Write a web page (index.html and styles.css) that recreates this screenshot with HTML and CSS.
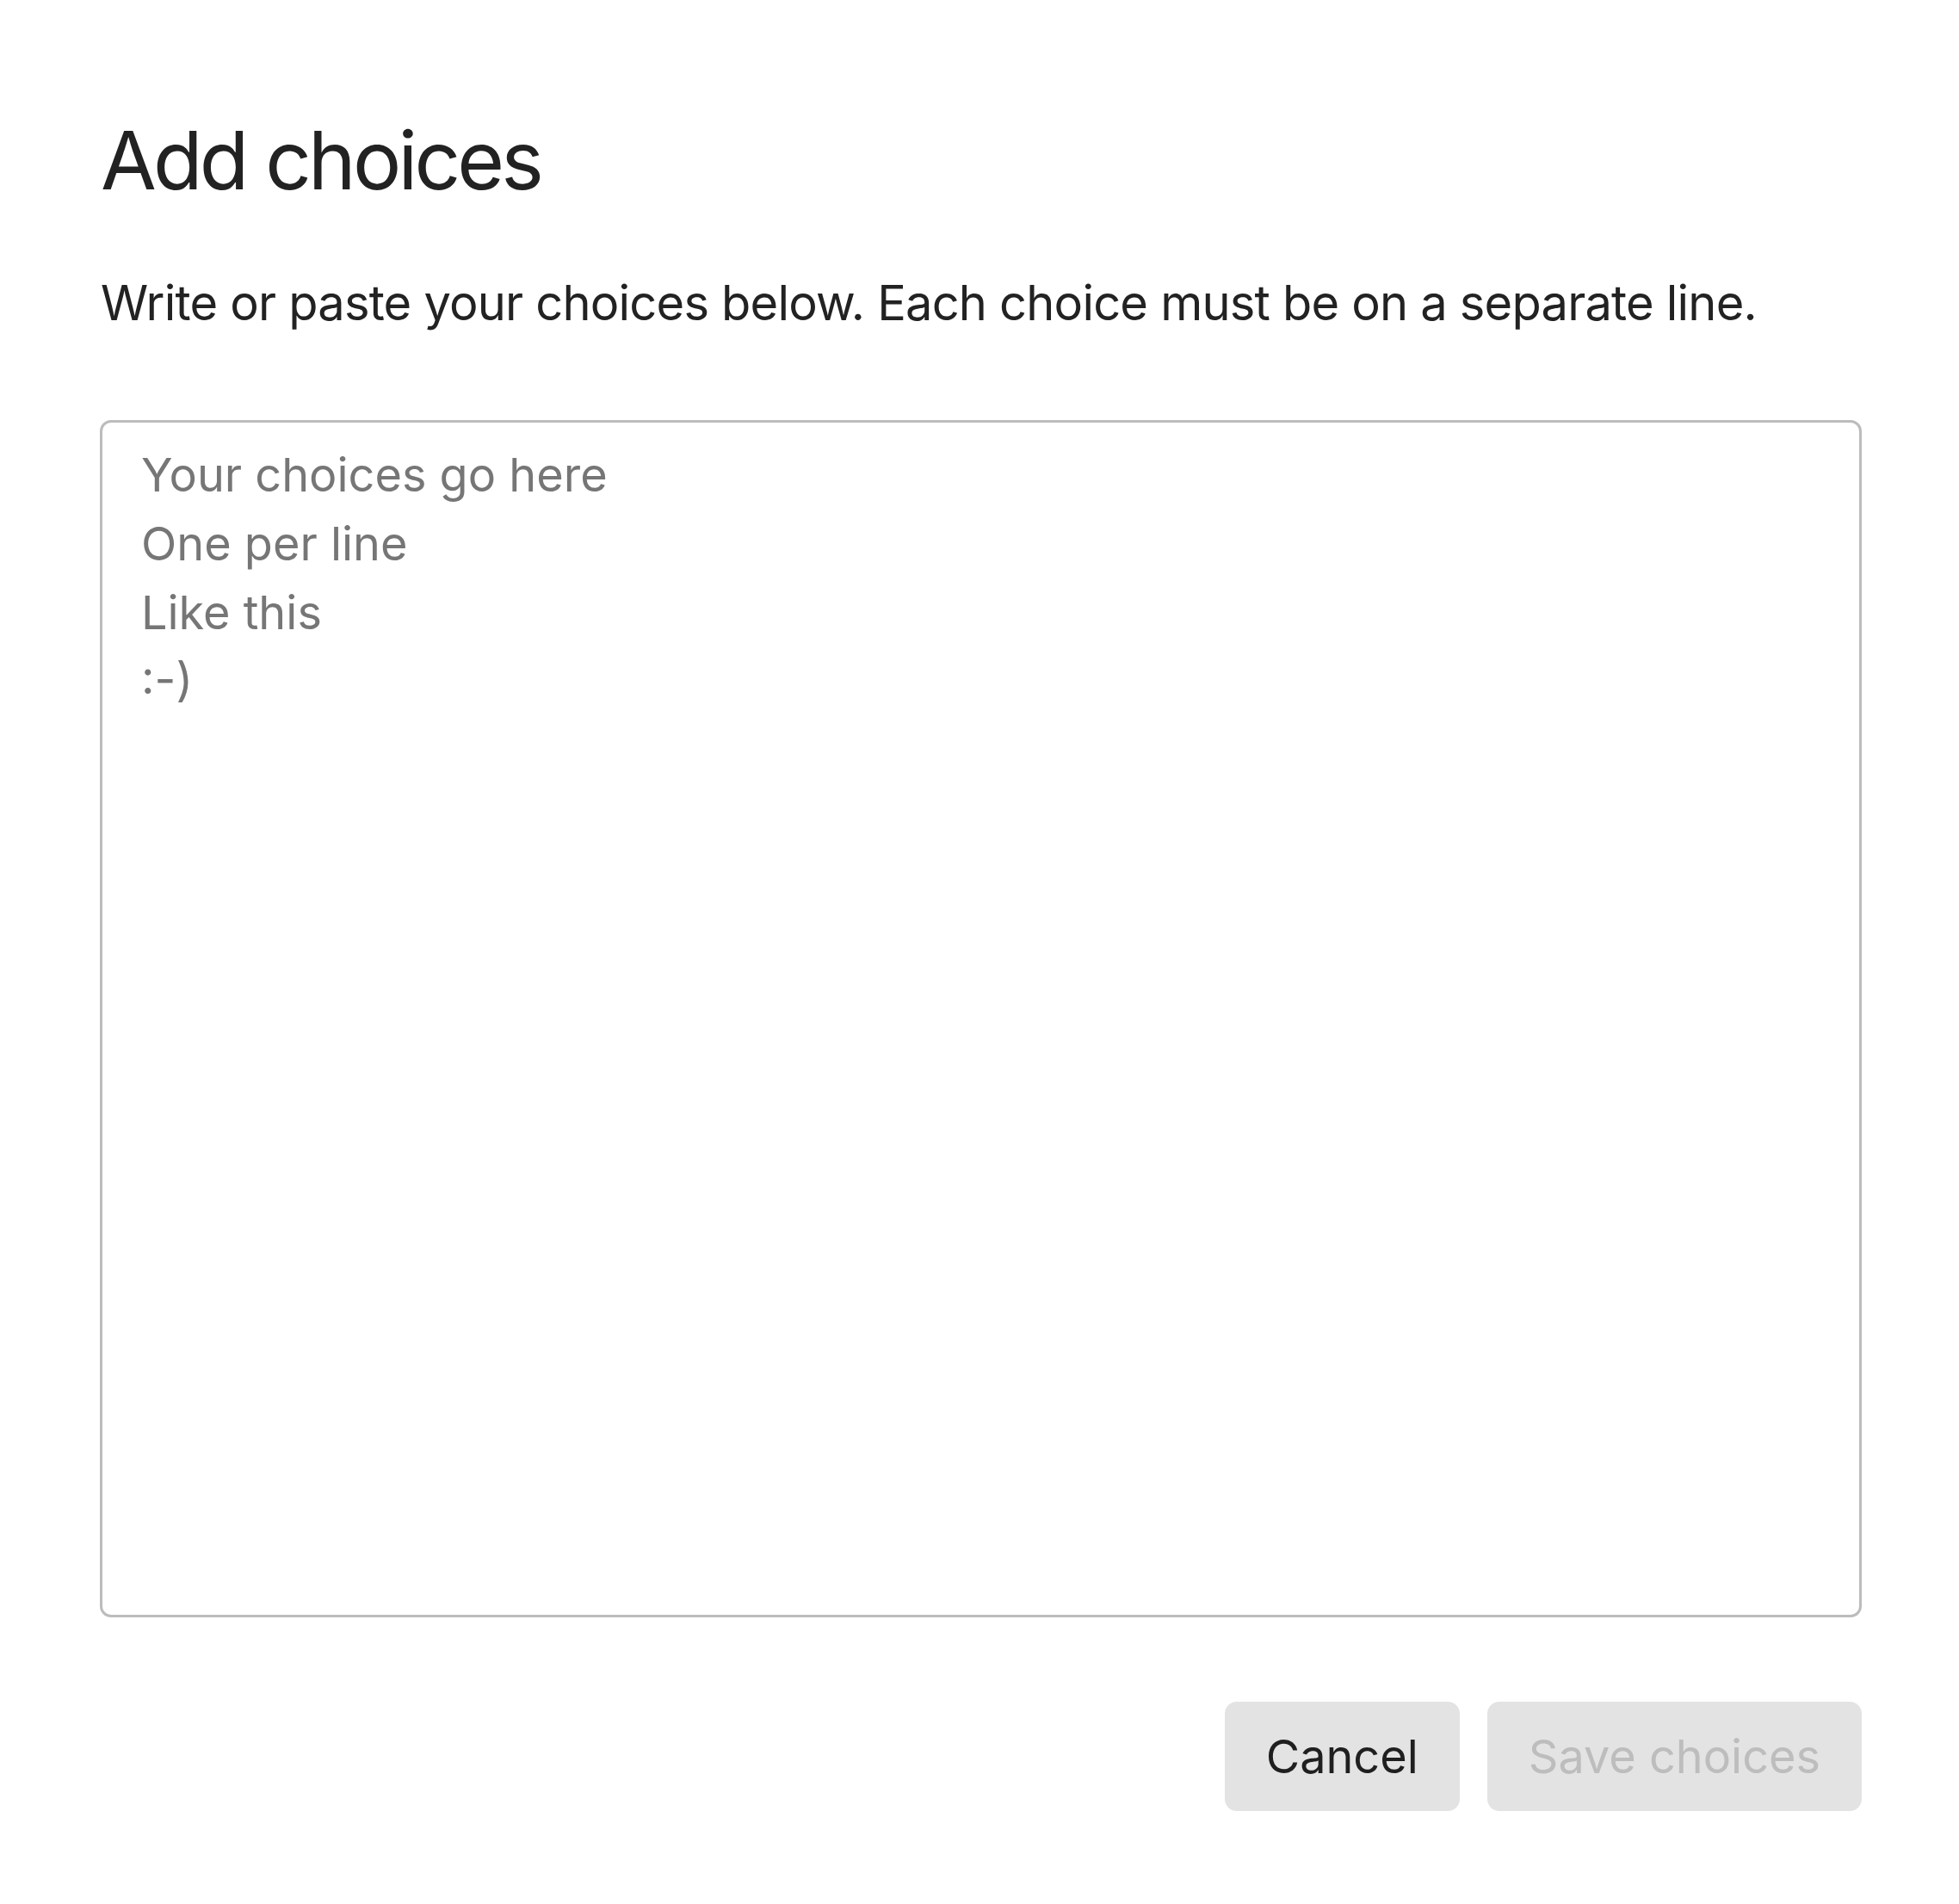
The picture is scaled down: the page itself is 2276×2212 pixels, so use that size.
FILE: index.html
```html
<!DOCTYPE html>
<html lang="en">
<head>
<meta charset="utf-8">
<title>Add choices</title>
<link rel="stylesheet" href="styles.css">
</head>
<body>
<div class="dialog" role="dialog" aria-labelledby="dlg-title">
  <h1 class="dialog-title" id="dlg-title">Add choices</h1>
  <p class="dialog-desc">Write or paste your choices below. Each choice must be on a separate line.</p>
  <div class="choices-input" role="textbox" aria-multiline="true">
    <div class="placeholder">
      <div class="ph-line">Your choices go here</div>
      <div class="ph-line">One per line</div>
      <div class="ph-line">Like this</div>
      <div class="ph-line">:-)</div>
    </div>
  </div>
  <div class="dialog-actions">
    <button class="btn btn-cancel" type="button">Cancel</button>
    <button class="btn btn-save" type="button" disabled>Save choices</button>
  </div>
</div>
</body>
</html>
```
FILE: styles.css
```css
html, body {
  margin: 0;
  padding: 0;
  background: #ffffff;
}
body {
  font-family: Inter, "Noto Sans", "Liberation Sans", sans-serif;
  color: #222222;
}
.dialog {
  padding: 128px 113px 108px 117px;
  display: flex;
  flex-direction: column;
}
.dialog-title {
  margin: 0;
  font-size: 94px;
  line-height: 116px;
  font-weight: 400;
  letter-spacing: -3.8px;
  color: #222222;
}
.dialog-desc {
  margin: 68px 0 0 0;
  font-size: 56px;
  line-height: 80px;
  letter-spacing: -0.8px;
  color: #222222;
}
.choices-input {
  margin-top: 96px;
  margin-left: -1px;
  height: 1391px;
  box-sizing: border-box;
  border: 3px solid #bcbcbc;
  border-radius: 13px;
  padding: 21px 45px;
  background: #fff;
}
.placeholder {
  color: #767676;
  font-size: 54px;
  line-height: 80px;
}
.dialog-actions {
  margin-top: 98px;
  display: flex;
  justify-content: flex-end;
  gap: 32px;
}
.btn {
  font-family: inherit;
  font-size: 54px;
  line-height: 64px;
  height: 127px;
  padding: 0 48px;
  border: none;
  border-radius: 14px;
  background: #e3e3e3;
}
.btn-cancel {
  color: #1f1f1f;
}
.btn-save {
  color: #bdbdbd;
}
```
